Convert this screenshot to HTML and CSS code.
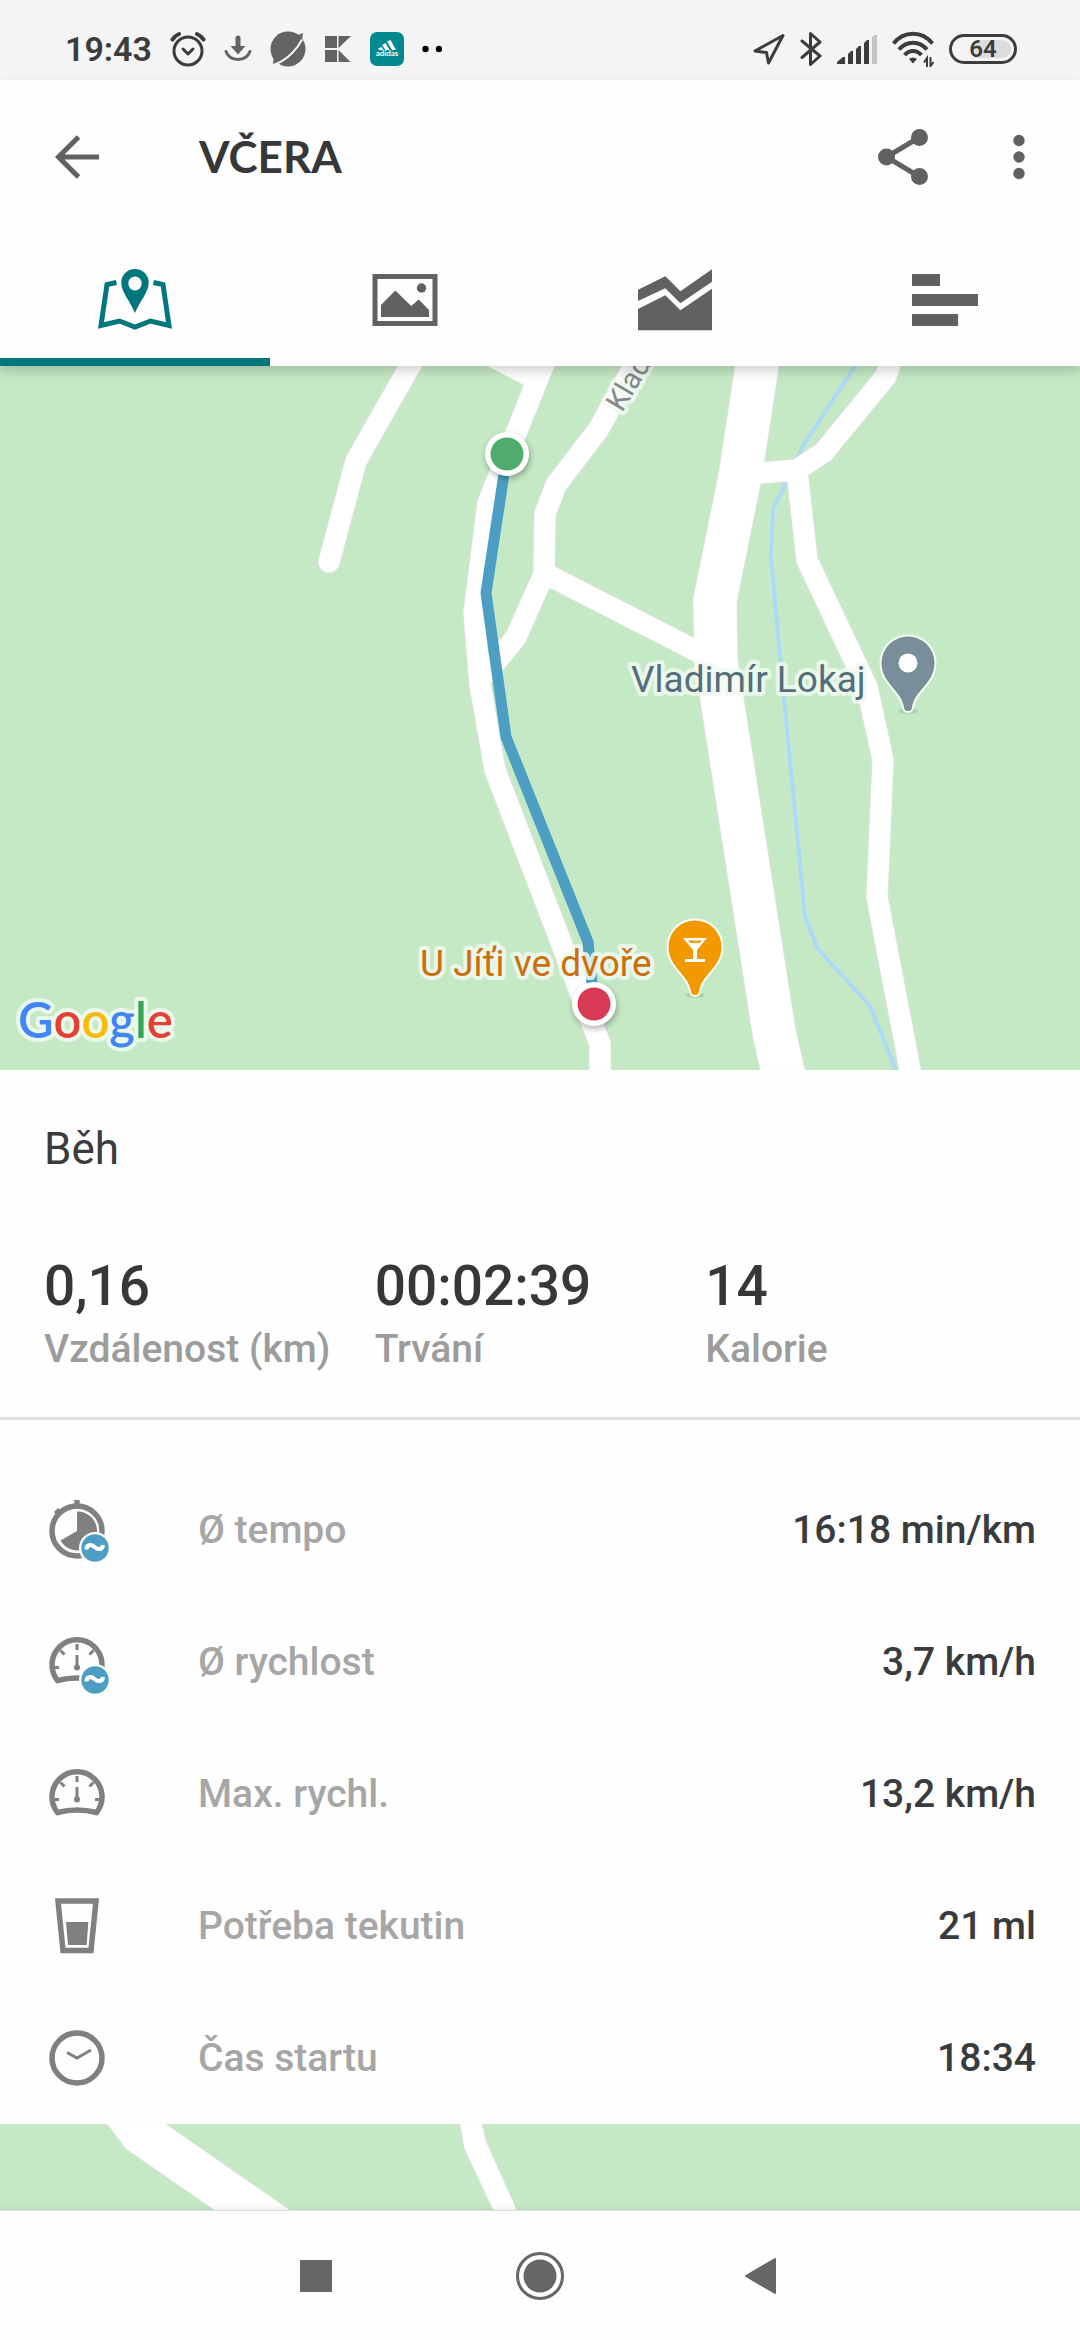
FILE: index.html
```html
<!DOCTYPE html>
<html lang="cs">
<head>
    <meta charset="UTF-8">
    <meta name="viewport" content="width=device-width, initial-scale=1.0">
    <title>Včera</title>
    <link rel="stylesheet" href="styles.css">
</head>
<body>
    <div class="status-bar">
        <div class="status-left">
            <span class="clock">19:43</span>
            <svg width="36" height="36" viewBox="0 0 36 36" fill="none" stroke="#3c3c3c" stroke-width="3" stroke-linecap="round" stroke-linejoin="round">
                <circle cx="18" cy="20" r="14"/>
                <path d="M13 18l5 5 5-5"/>
                <path d="M2.500 8.500q3-4 6.500-5.500M33.500 8.500q-3-4-6.500-5.500" stroke-width="4"/>
            </svg>
            <svg width="28" height="36" viewBox="0 0 28 36" fill="none" stroke="#636363">
                <path d="M14 7v10" stroke-width="5" stroke-linecap="round"/>
                <path d="M6.500 15h15L14 23.500z" fill="#636363" stroke="none"/>
                <path d="M2 20.500C6 31 22 31 26 20.500" stroke-width="3" stroke-linecap="round"/>
            </svg>
            <svg width="36" height="36" viewBox="0 0 36 36">
                <circle cx="18" cy="18" r="17.500" fill="#636363"/>
                <path d="M25 5.500l8-3.500-1 8zM3 33l1-9 6 6z" fill="#636363"/>
                <path d="M32 8.500C28 17 18 28 7 32.500" fill="none" stroke="#f4f4f4" stroke-width="2"/>
            </svg>
            <svg width="28" height="36" viewBox="0 0 28 36" fill="#636363">
                <path d="M1 5h12v12H1zM1 19h12v12H1zM14.500 5H27L14.500 17zM14.500 19l12 12h-12z"/>
            </svg>
            <svg width="34" height="34" viewBox="0 0 34 34">
                <rect width="34" height="34" rx="7" fill="#038a90"/>
                <path d="M17 9.500l3.500-1.500 5.500 10h-4zM12 13l3.500-2 4 7h-4zM8 16.500l3.500-1.500 2 3H9z" fill="#fff"/>
                <text x="17" y="24" class="app-name">adidas</text>
            </svg>
            <svg width="20" height="36" viewBox="0 0 20 36"><circle cx="3.500" cy="18" r="3.200"/><circle cx="17" cy="18" r="3.200"/></svg>
        </div>
        <div class="status-right">
            <svg width="32" height="34" viewBox="0 0 32 34" fill="none" stroke="#3c3c3c" stroke-width="3" stroke-linejoin="round">
                <path d="M30 3.500L2 19l11.500 1.500L15.500 31z"/>
            </svg>
            <svg width="22" height="36" viewBox="0 0 22 36" fill="none" stroke="#3c3c3c" stroke-width="3" stroke-linecap="round" stroke-linejoin="round">
                <path d="M2 10l18 15-9.500 8.500v-31L20 11 2 26.500"/>
            </svg>
            <svg width="40" height="30" viewBox="0 0 40 30" fill="#3c3c3c">
                <path d="M0 30v-2l6-5h2v7zM11 30V20l3-3h2v13zM19 30V15l3-3h2v18zM27 30V9l3-3h2v24z"/>
                <path d="M35 30V3l3-2h2v29z" fill="#c4c4c4"/>
            </svg>
            <svg width="42" height="36" viewBox="0 0 42 36" fill="none" stroke="#3c3c3c" stroke-width="4">
                <path d="M1.500 12.500C12-.5 30-.5 40.500 12.500M7 18.500c8-9 20-9 28 0M12.500 24c5-5.500 12-5.500 17 0"/>
                <path d="M17 28q4-3 8 0l-4 4.500z" fill="#3c3c3c" stroke="none"/>
                <path d="M35 36v-9l-3 4.500M38.500 26v9l3-4" stroke-width="2"/>
            </svg>
            <span class="battery"><span>64</span></span>
        </div>
    </div>

    <header class="app-header">
        <div class="app-bar">
            <button class="icon-button" aria-label="Zpět">
                <svg width="66" height="66" viewBox="0 0 66 66" fill="none" stroke="#606261" stroke-width="5">
                    <path d="M55 33H15M34.500 13L14.500 33l20 20"/>
                </svg>
            </button>
            <h1>VČERA</h1>
            <button class="icon-button" aria-label="Sdílet">
                <svg width="66" height="66" viewBox="0 0 66 66" fill="#606261">
                    <path d="M49 13.500L16.500 33 49 52.500" fill="none" stroke="#606261" stroke-width="5"/>
                    <circle cx="16.500" cy="33" r="8.500"/><circle cx="49.500" cy="13.500" r="8.500"/><circle cx="49.500" cy="52.500" r="8.500"/>
                </svg>
            </button>
            <button class="icon-button" aria-label="Další možnosti">
                <svg width="66" height="66" viewBox="0 0 66 66" fill="#606261">
                    <circle cx="33" cy="16.500" r="5.700"/><circle cx="33" cy="33" r="5.700"/><circle cx="33" cy="49.500" r="5.700"/>
                </svg>
            </button>
        </div>
        <nav class="tabs">
            <button class="tab active" aria-label="Mapa">
                <svg width="80" height="66" viewBox="0 0 80 66">
                    <path d="M21.500 15.500l-9.500 2L6 58.500l18.500-4.500L40 60l15.500-6L74 58.500l-6-41-9.500-2" fill="none" stroke="currentColor" stroke-width="5"/>
                    <path fill-rule="evenodd" d="M40 2a13.700 13.700 0 0 0-13.700 14C26.300 25 35 34 40 46c5-12 13.700-21 13.700-30A13.700 13.700 0 0 0 40 2zm0 7.500a6.700 7 0 1 1 0 14 6.700 7 0 0 1 0-14z" fill="currentColor"/>
                </svg>
            </button>
            <button class="tab" aria-label="Fotky">
                <svg width="80" height="66" viewBox="0 0 80 66" fill="currentColor">
                    <rect x="10" y="9.500" width="60" height="47" fill="none" stroke="currentColor" stroke-width="5"/>
                    <path d="M16 50V38l14.300-14.500L46.200 39l7.500-6.500L64 43v7z"/>
                    <circle cx="56.500" cy="21" r="4.700"/>
                </svg>
            </button>
            <button class="tab" aria-label="Graf">
                <svg width="80" height="66" viewBox="0 0 80 66" fill="currentColor">
                    <path d="M3 22.700L30.300 9.300l15.100 15L77 2.300v12.400L45.400 36.300l-15.100-15L3 34z"/>
                    <path d="M3 42l27.300-13.700 15.100 15L77 21.700v41.600H3z"/>
                </svg>
            </button>
            <button class="tab" aria-label="Úseky">
                <svg width="80" height="66" viewBox="0 0 80 66" fill="currentColor">
                    <path d="M7 7h28v12H7zM7 27h66v12H7zM7 47h46v12H7z"/>
                </svg>
            </button>
        </nav>
    </header>

    <main>
        <svg class="map" viewBox="0 366 1080 704" role="img" aria-label="Mapa trasy">
            <defs>
                <g id="roads">
                    <path d="M422 345L410 366 356 461 329 562"/>
                    <path d="M551 346L543 366 488 503 474 613 480 685 495 770 600 1044V1090"/>
                    <path d="M645 346L598 430 556 485 545 514 544 574 516 637 487 673"/>
                    <path d="M544 573L716 661"/>
                    <path d="M745 474L797 470 824 452 886 376 895 350"/>
                    <path d="M797 471L807 560 867 687 883 760 877 897 914 1090"/>
                </g>
                <path id="highway" d="M761 340L757 366 740 477 715 600 716 661 774 1032 787 1090"/>
                <path id="pin" d="M0-26.500a26.500 26.500 0 0 0-26.500 26.500C-26.500 20-7 27-4 44a4 4 0 0 0 8 0C7 27 26.500 20 26.500 0A26.500 26.500 0 0 0 0-26.500z"/>
            </defs>
            <rect y="366" width="1080" height="704" fill="#c5e9c5"/>
            <path class="river" d="M855 366L804 444 785 485 773 509 771 557 780 656 805 916 817 948 870 1006 896 1070"/>
            <use href="#roads" class="road-edge"/>
            <use href="#highway" class="highway-edge"/>
            <use href="#roads" class="road"/>
            <use href="#highway" class="highway"/>
            <path d="M487 366l37 19 20-19z" fill="#fff"/>
            <path class="route" d="M507 454L486 593 506 737 588 942 594 1004"/>

            <text class="street" transform="translate(622 413) rotate(-59)">Klad</text>
            <text class="place" x="631" y="692">Vladimír Lokaj</text>
            <text class="place bar" x="420" y="976">U Jíťi ve dvoře</text>

            <ellipse cx="908" cy="711" rx="10" ry="3" fill="#000" opacity=".1"/>
            <g transform="translate(908 663)">
                <use href="#pin" class="pin" fill="#788e9a"/>
                <circle r="9.500" fill="#fff"/>
            </g>
            <ellipse cx="695" cy="995" rx="10" ry="3" fill="#000" opacity=".1"/>
            <g transform="translate(695 947)">
                <use href="#pin" class="pin" fill="#f29900"/>
                <path d="M-12-9h24L2 3v9h8v3h-20v-3h8V3z" fill="#fff"/>
                <path d="M-7-6.500H7L5-4H-5z" fill="#f29900"/>
            </g>

            <g class="marker">
                <circle cx="507" cy="454" r="22" fill="#fff"/><circle cx="507" cy="454" r="16.500" fill="#50ac6c"/>
                <circle cx="594" cy="1004" r="22" fill="#fff"/><circle cx="594" cy="1004" r="16.500" fill="#d83954"/>
            </g>

            <text class="google" x="18" y="1038"><tspan fill="#4285f4">G</tspan><tspan fill="#e34133">o</tspan><tspan fill="#f6bb0b">o</tspan><tspan fill="#4285f4">g</tspan><tspan fill="#34a853">l</tspan><tspan fill="#e34133">e</tspan></text>
        </svg>

        <section class="summary">
            <h2>Běh</h2>
            <dl class="totals">
                <div><dd>0,16</dd><dt>Vzdálenost (km)</dt></div>
                <div><dd>00:02:39</dd><dt>Trvání</dt></div>
                <div><dd>14</dd><dt>Kalorie</dt></div>
            </dl>
        </section>

        <svg class="symbols" width="0" height="0">
            <symbol id="gauge" viewBox="0 0 66 66">
                <path d="M13.500 51.500A25 25 0 1 1 52.500 51.500Q33 46.500 13.500 51.500z" fill="none" stroke="#808080" stroke-width="5.500"/>
                <path d="M33 15v6M10 38.500h5M51 38.500h5M16.500 21.500l4 4M49.500 21.500l-4 4M33 26v12" stroke="#808080" stroke-width="3"/>
                <circle cx="33" cy="38.500" r="3"/>
            </symbol>
            <symbol id="average" viewBox="0 0 66 66">
                <circle cx="51" cy="51" r="16" fill="#fefefe"/>
                <circle cx="51" cy="51" r="13.700" fill="#4c9fc3"/>
                <path d="M42.500 52.500c0-5 4.500-5.500 8-2.500s8 3 8.500-2" fill="none" stroke="#fff" stroke-width="4"/>
            </symbol>
        </svg>

        <dl class="details">
            <div class="row">
                <svg width="66" height="66" viewBox="0 0 66 66" fill="#808080">
                    <circle cx="33" cy="34" r="25" fill="none" stroke="#808080" stroke-width="5.500"/>
                    <path d="M30.300 3h5.400v6h-5.400zM10 15l4-4 5 4-5 5z"/>
                    <path d="M33 34V14.500A19.500 19.500 0 1 1 16.500 43.500z"/>
                    <use href="#average"/>
                </svg>
                <dt>Ø tempo</dt><dd>16:18 min/km</dd>
            </div>
            <div class="row">
                <svg width="66" height="66" viewBox="0 0 66 66" fill="#808080"><use href="#gauge"/><use href="#average"/></svg>
                <dt>Ø rychlost</dt><dd>3,7 km/h</dd>
            </div>
            <div class="row">
                <svg width="66" height="66" viewBox="0 0 66 66" fill="#808080"><use href="#gauge"/></svg>
                <dt>Max. rychl.</dt><dd>13,2 km/h</dd>
            </div>
            <div class="row">
                <svg width="66" height="66" viewBox="0 0 66 66" fill="#808080">
                    <path d="M14 8h38l-5 49.500H19z" fill="none" stroke="#808080" stroke-width="5.500"/>
                    <path d="M22 29h22.300l-1.600 23H24z"/>
                </svg>
                <dt>Potřeba tekutin</dt><dd>21 ml</dd>
            </div>
            <div class="row">
                <svg width="66" height="66" viewBox="0 0 66 66" fill="none" stroke="#808080">
                    <circle cx="33" cy="33" r="25" stroke-width="5.500"/>
                    <path d="M23 27.500L33 33l14-8" stroke-width="3"/>
                </svg>
                <dt>Čas startu</dt><dd>18:34</dd>
            </div>
        </dl>

        <svg class="map" viewBox="0 2124 1080 86" role="img" aria-label="Mapa okolí">
            <rect y="2124" width="1080" height="86" fill="#c5e9c5"/>
            <g fill="#fff" stroke="#dfe3e3">
                <path d="M104 2114l3 10 19 25 88 61 15 10h76l-15-10-124-86-15-10z"/>
                <path d="M459 2114l1 10 4 24 29 62 4 10h25l-5-10-31-69-4-17-1-10z"/>
            </g>
        </svg>
    </main>

    <footer class="nav-bar">
        <button class="icon-button" aria-label="Poslední aplikace">
            <svg width="48" height="50" viewBox="0 0 48 50" fill="#666"><rect x="8" y="9" width="32" height="32" rx="1"/></svg>
        </button>
        <button class="icon-button" aria-label="Domů">
            <svg width="48" height="50" viewBox="0 0 48 50" fill="#666">
                <circle cx="24" cy="25" r="22.500" fill="none" stroke="#666" stroke-width="3"/><circle cx="24" cy="25" r="16.500"/>
            </svg>
        </button>
        <button class="icon-button" aria-label="Zpět">
            <svg width="48" height="50" viewBox="0 0 48 50" fill="#666" stroke="#666" stroke-width="2" stroke-linejoin="round"><path d="M35 8v34L6 25z"/></svg>
        </button>
    </footer>
</body>
</html>
```

FILE: styles.css
```css
/* General Styles */
* {
    box-sizing: border-box;
}
body {
    margin: 0;
    min-height: 100vh;
    display: flex;
    flex-direction: column;
    font-family: Roboto, sans-serif;
    background-color: #fefefe;
    color: #3a3b3c;
}
svg {
    display: block;
    flex-shrink: 0;
}
h1, h2, dl, dd, dt {
    margin: 0;
}
button {
    padding: 0;
    border: 0;
    background: none;
    color: inherit;
    cursor: pointer;
}

/* Status Bar */
.status-bar {
    display: flex;
    justify-content: space-between;
    height: 80px;
    padding: 18px 63px 0 65px;
    background-color: #f4f4f4;
}
.status-left, .status-right {
    display: flex;
    align-items: center;
    gap: 18px;
}
.status-right {
    gap: 15px;
}
.clock {
    font-size: 34px;
    font-weight: 600;
    color: #3c3c3c;
}
.app-name {
    font: bold 8px Lato, sans-serif;
    text-anchor: middle;
    fill: #fff;
}
.battery {
    width: 68px;
    height: 30px;
    padding: 3px;
    border: 3px solid #3c3c3c;
    border-radius: 15px;
}
.battery span {
    display: block;
    height: 18px;
    border-radius: 9px;
    background: linear-gradient(to right, transparent 36%, #dcdcdc 36%);
    font-size: 24px;
    font-weight: 600;
    line-height: 18px;
    text-align: center;
    color: #3c3c3c;
}

/* Header */
.app-header {
    position: relative;
    z-index: 1;
    background-color: #fefefe;
    box-shadow: 0 6px 10px rgba(0, 0, 0, 0.16);
}
.app-bar {
    display: flex;
    align-items: center;
    height: 154px;
    padding: 0 28px 0 44px;
    gap: 50px;
}
.app-bar h1 {
    flex: 1;
    padding-left: 39px;
    font-family: Lato, sans-serif;
    font-size: 44px;
    font-weight: 700;
    line-height: 52px;
    padding-bottom: 2px;
    color: #363738;
}
.tabs {
    display: grid;
    grid-template-columns: repeat(4, 1fr);
}
.tab {
    display: flex;
    align-items: center;
    justify-content: center;
    height: 132px;
    border: solid transparent;
    border-width: 8px 0;
    color: #606261;
}
.tab.active {
    border-bottom-color: #00767d;
    color: #00767d;
}

/* Map */
.map {
    width: 100%;
    height: auto;
}
.road, .road-edge, .highway, .highway-edge, .river, .route {
    fill: none;
    stroke: #fff;
    stroke-width: 21px;
}
.road, .road-edge {
    stroke-linecap: round;
}
.road-edge {
    stroke: #dde3de;
    stroke-width: 23px;
}
.highway {
    stroke-width: 43px;
}
.highway-edge {
    stroke: #dde3de;
    stroke-width: 45px;
}
.river {
    stroke: #aadaf5;
    stroke-width: 4px;
}
.route {
    stroke: #4c9fc3;
    stroke-width: 11px;
}
.street, .place, .google {
    paint-order: stroke;
    stroke: rgba(240, 250, 241, 0.85);
    stroke-width: 8px;
    stroke-linejoin: round;
}
.street {
    font-size: 29px;
    fill: #85888b;
}
.place {
    font-size: 37px;
    fill: #546e7a;
}
.place.bar {
    fill: #cc6e0c;
}
.pin {
    paint-order: stroke;
    stroke: #f6fbf2;
    stroke-width: 4px;
}
.marker {
    filter: drop-shadow(1px 3px 3px rgba(0, 0, 0, 0.3));
}
.google {
    font-family: Lato, sans-serif;
    font-size: 49px;
    font-weight: 600;
}

/* Summary */
.summary {
    padding: 53px 44px 44px;
    border-bottom: 3px solid #dedfde;
}
.summary h2 {
    font-size: 44px;
    font-weight: 400;
    line-height: 52px;
}
.totals {
    display: grid;
    grid-template-columns: repeat(3, 1fr);
    padding-top: 78px;
}
.totals div {
    display: flex;
    flex-direction: column;
    gap: 6px;
}
.totals dd {
    font-size: 55px;
    font-weight: 500;
    line-height: 66px;
    color: #363738;
}
.totals dt {
    font-size: 39px;
    font-weight: 500;
    line-height: 48px;
    white-space: nowrap;
    color: #9b9c9b;
}

/* Details */
.symbols {
    position: absolute;
}
.details {
    padding-top: 44px;
    font-size: 39px;
    font-weight: 500;
}
.row {
    display: flex;
    align-items: center;
    height: 132px;
    padding: 0 44px;
}
.row dt {
    flex: 1;
    padding-left: 88px;
    color: #a6a6a6;
}

/* Navigation Bar */
.nav-bar {
    flex: 1;
    display: flex;
    align-items: center;
    justify-content: center;
    gap: 176px;
    border-top: 1px solid #dedede;
    box-shadow: 0 0 8px rgba(0, 0, 0, 0.12);
}
```
